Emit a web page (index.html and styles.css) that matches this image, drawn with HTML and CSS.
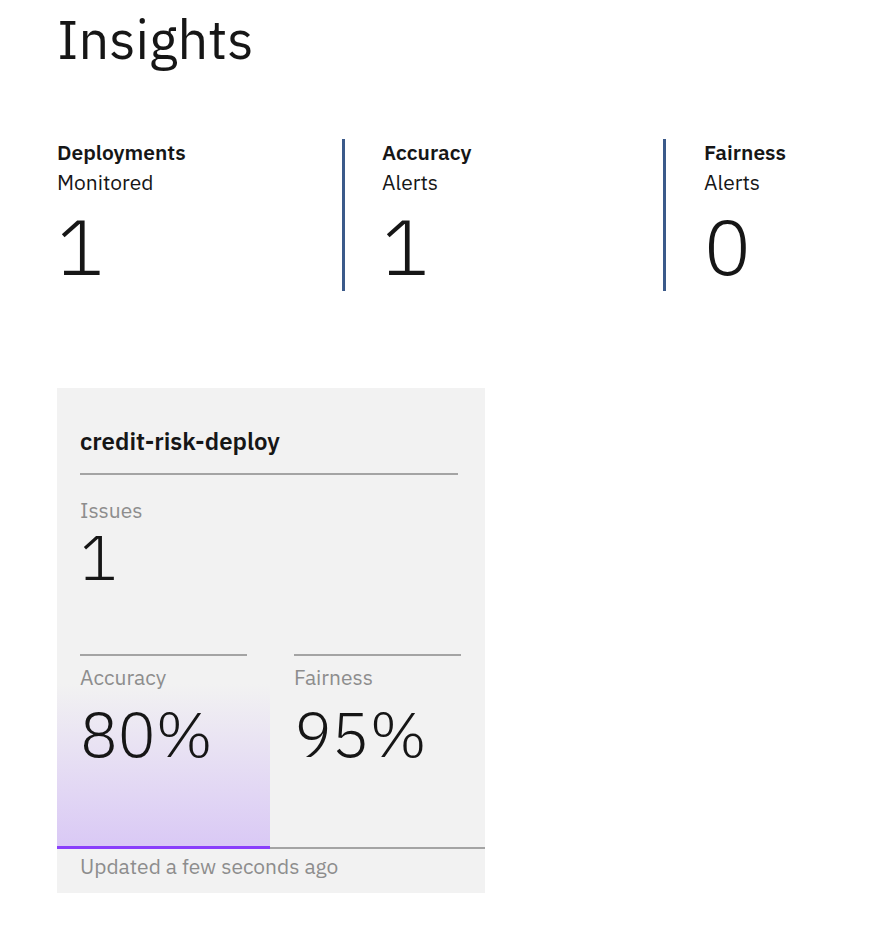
FILE: index.html
```html
<!DOCTYPE html>
<html lang="en">
<head>
<meta charset="utf-8">
<title>Insights</title>
<link rel="stylesheet" href="styles.css">
</head>
<body>
<main class="page">
  <h1 class="title">Insights</h1>
  <section class="stats">
    <div class="stat stat-first">
      <div class="stat-label">Deployments</div>
      <div class="stat-sub">Monitored</div>
      <div class="stat-value">1</div>
    </div>
    <div class="stat">
      <div class="stat-label">Accuracy</div>
      <div class="stat-sub">Alerts</div>
      <div class="stat-value">1</div>
    </div>
    <div class="stat stat-last">
      <div class="stat-label">Fairness</div>
      <div class="stat-sub">Alerts</div>
      <div class="stat-value">0</div>
    </div>
  </section>
  <section class="card">
    <div class="card-head">credit-risk-deploy</div>
    <div class="issues">
      <div class="muted">Issues</div>
      <div class="issues-value">1</div>
    </div>
    <div class="metrics">
      <div class="metric metric-active">
        <div class="metric-head"><div class="muted">Accuracy</div></div>
        <div class="metric-value">80%</div>
      </div>
      <div class="metric">
        <div class="metric-head"><div class="muted">Fairness</div></div>
        <div class="metric-value">95%</div>
      </div>
    </div>
    <div class="card-foot">Updated a few seconds ago</div>
  </section>
</main>
</body>
</html>
```

FILE: styles.css
```css
* { box-sizing: border-box; }
html, body { margin: 0; padding: 0; background: #ffffff; }
body {
  font-family: "IBM Plex Sans", "Open Sans", "Noto Sans", "Liberation Sans", sans-serif;
  color: #161616;
}
.page {
  padding: 4px 0 0 57px;
}
.title {
  margin: 0;
  font-size: 54px;
  font-weight: 400;
  line-height: 70px;
  color: #161616;
}
.stats {
  display: flex;
  margin-top: 65px;
}
.stat {
  flex: 0 0 321px;
  height: 152px;
  border-left: 3px solid #3b5a8a;
  padding-left: 37px;
  padding-top: 0;
}
.stat-first {
  flex: 0 0 285px;
  border-left: none;
  padding-left: 0;
}
.stat-last {
  flex: 0 0 200px;
  padding-left: 38px;
}
.stat-label {
  font-size: 21px;
  font-weight: 600;
  line-height: 26px;
}
.stat-sub {
  font-size: 21px;
  font-weight: 400;
  line-height: 34px;
}
.stat-value {
  font-size: 78px;
  font-weight: 300;
  line-height: 86px;
  margin-top: 4px;
}
.card {
  margin-top: 97px;
  width: 428px;
  background: #f2f2f2;
  display: flex;
  flex-direction: column;
}
.card-head {
  margin: 36px 27px 0 23px;
  padding-bottom: 15px;
  border-bottom: 2px solid #a4a4a4;
  font-size: 24px;
  font-weight: 600;
  line-height: 34px;
}
.muted {
  color: #8d8d8d;
  font-size: 21px;
  line-height: 26px;
}
.issues {
  padding: 22px 23px 0;
  height: 179px;
}
.issues-value {
  font-size: 62px;
  font-weight: 300;
  line-height: 66px;
  margin-top: 1px;
}
.metrics {
  display: flex;
  border-bottom: 2px solid #a4a4a4;
}
.metric {
  width: 213px;
  height: 193px;
  padding: 0 0 0 24px;
}
.metric-head {
  width: 167px;
  border-top: 2px solid #a4a4a4;
  padding-top: 8px;
}
.metric:first-child { padding-left: 23px; }
.metric-active {
  background: linear-gradient(to bottom, #f2f2f2 30px, #d9c8f5 100%);
  box-shadow: inset 0 -3px 0 #8a3ffc;
  margin-bottom: -2px;
  height: 195px;
}
.metric-value {
  font-size: 63px;
  font-weight: 300;
  line-height: 80px;
  margin-top: 3px;
}
.card-foot {
  padding: 2px 23px 0;
  height: 44px;
  color: #8d8d8d;
  font-size: 21px;
  line-height: 30px;
}
```
